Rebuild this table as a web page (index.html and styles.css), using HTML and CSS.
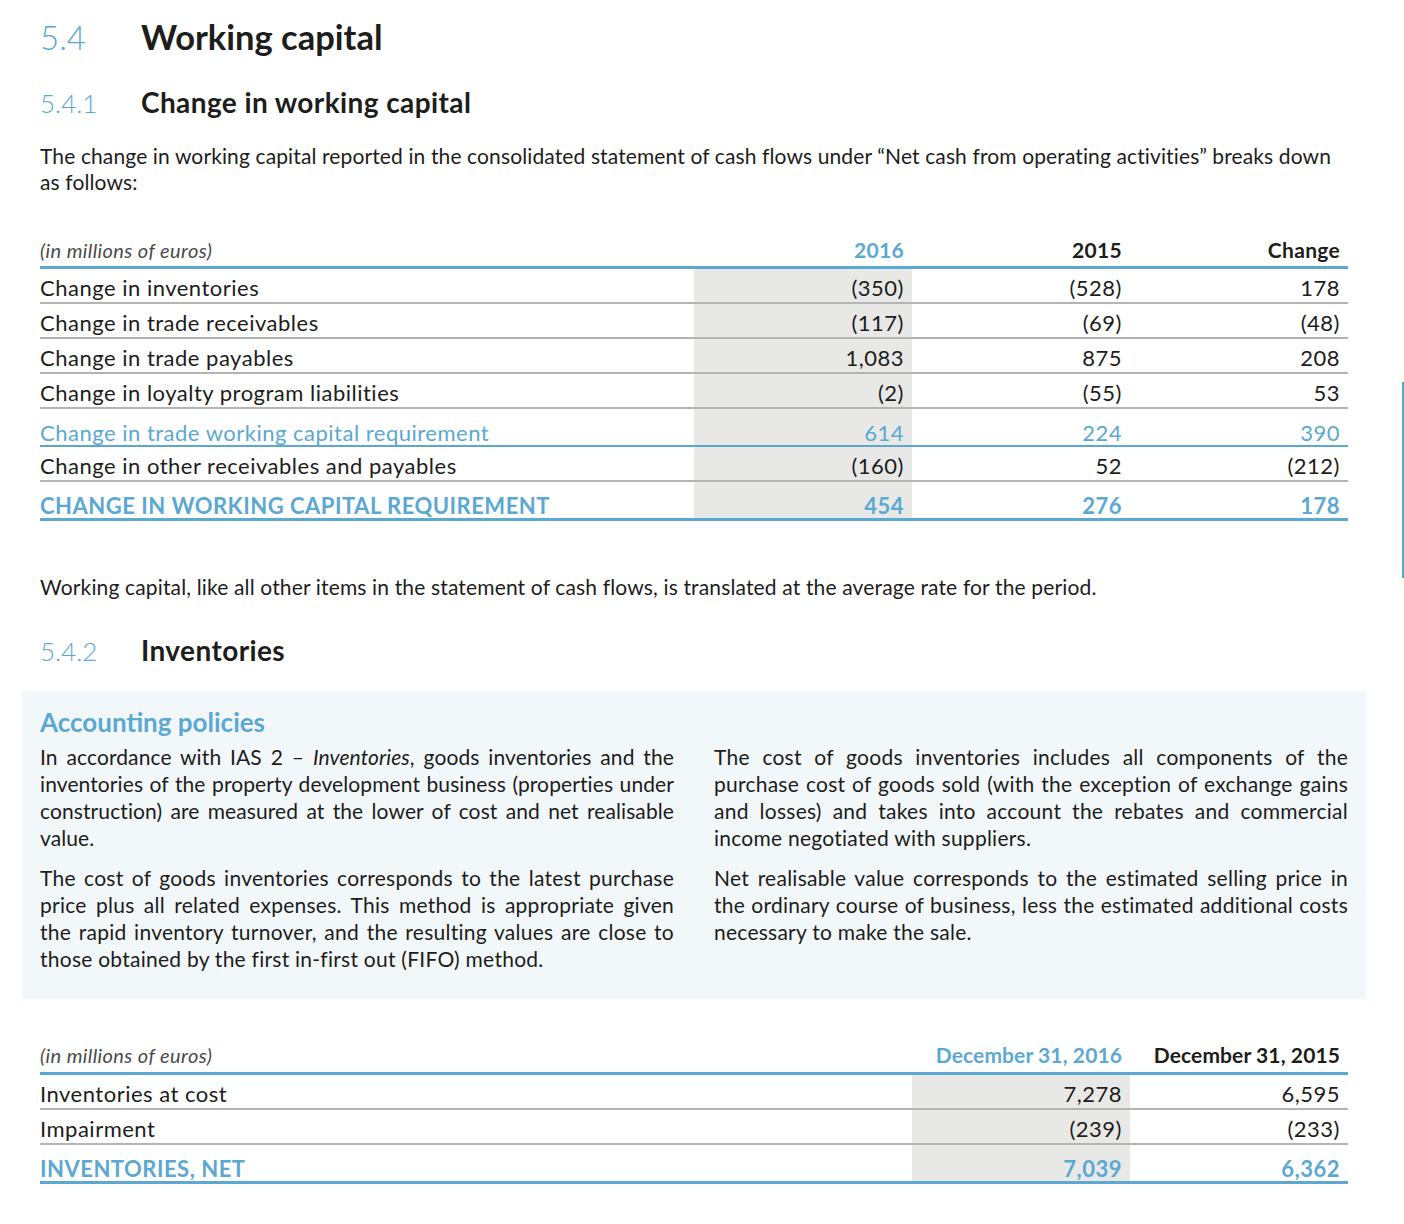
FILE: index.html
```html
<!DOCTYPE html>
<html lang="en">
<head>
<meta charset="utf-8">
<title>Working capital</title>
<link rel="stylesheet" href="styles.css">
</head>
<body>
<div class="page">
  <h1 class="h1"><span class="num">5.4</span><span class="title">Working capital</span></h1>
  <h2 class="h2"><span class="num">5.4.1</span><span class="title">Change in working capital</span></h2>
  <p class="intro">The change in working capital reported in the consolidated statement of cash flows under “Net cash from operating activities” breaks down as follows:</p>

  <table class="fin fin1">
    <colgroup><col class="c-label"><col class="c-val"><col class="c-val"><col class="c-val"></colgroup>
    <thead>
      <tr><th class="unit">(in millions of euros)</th><th class="cur">2016</th><th>2015</th><th>Change</th></tr>
    </thead>
    <tbody>
      <tr><td>Change in inventories</td><td class="sh">(350)</td><td>(528)</td><td>178</td></tr>
      <tr><td>Change in trade receivables</td><td class="sh">(117)</td><td>(69)</td><td>(48)</td></tr>
      <tr><td>Change in trade payables</td><td class="sh">1,083</td><td>875</td><td>208</td></tr>
      <tr><td>Change in loyalty program liabilities</td><td class="sh">(2)</td><td>(55)</td><td>53</td></tr>
      <tr class="sub"><td>Change in trade working capital requirement</td><td class="sh">614</td><td>224</td><td>390</td></tr>
      <tr><td>Change in other receivables and payables</td><td class="sh">(160)</td><td>52</td><td>(212)</td></tr>
      <tr class="tot"><td>CHANGE IN WORKING CAPITAL REQUIREMENT</td><td class="sh">454</td><td>276</td><td>178</td></tr>
    </tbody>
  </table>

  <p class="note">Working capital, like all other items in the statement of cash flows, is translated at the average rate for the period.</p>

  <h2 class="h2 h2b"><span class="num">5.4.2</span><span class="title">Inventories</span></h2>

  <section class="policy">
    <h3 class="policy-title">Accounting policies</h3>
    <div class="policy-cols">
      <div class="col">
        <p class="tight">In accordance with IAS 2 – <em>Inventories</em>, goods inventories and the inventories of the property development business (properties under construction) are measured at the lower of cost and net realisable value.</p>
        <p>The cost of goods inventories corresponds to the latest purchase price plus all related expenses. This method is appropriate given the rapid inventory turnover, and the resulting values are close to those obtained by the first in-first out (FIFO) method.</p>
      </div>
      <div class="col">
        <p>The cost of goods inventories includes all components of the purchase cost of goods sold (with the exception of exchange gains and losses) and takes into account the rebates and commercial income negotiated with suppliers.</p>
        <p>Net realisable value corresponds to the estimated selling price in the ordinary course of business, less the estimated additional costs necessary to make the sale.</p>
      </div>
    </div>
  </section>

  <table class="fin fin2">
    <colgroup><col class="c-label2"><col class="c-val"><col class="c-val"></colgroup>
    <thead>
      <tr><th class="unit">(in millions of euros)</th><th class="cur">December 31, 2016</th><th>December 31, 2015</th></tr>
    </thead>
    <tbody>
      <tr><td>Inventories at cost</td><td class="sh">7,278</td><td>6,595</td></tr>
      <tr><td>Impairment</td><td class="sh">(239)</td><td>(233)</td></tr>
      <tr class="tot"><td>INVENTORIES, NET</td><td class="sh">7,039</td><td>6,362</td></tr>
    </tbody>
  </table>
</div>
<div class="edge-mark"></div>
</body>
</html>
```

FILE: styles.css
```css
html, body {
  margin: 0;
  padding: 0;
  background: #ffffff;
}
body {
  font-family: Lato, "Open Sans", sans-serif;
  color: #1d1d1b;
  width: 1404px;
  min-height: 1224px;
  position: relative;
}
.page {
  padding: 15px 56px 0 40px;
}
.h1, .h2 {
  display: grid;
  grid-template-columns: 101px auto;
  margin: 0;
  align-items: baseline;
}
.num {
  color: #5ba8d3;
  font-weight: 300;
  letter-spacing: 0;
}
.title {
  font-weight: 700;
  color: #1d1d1b;
}
.h1 {
  font-size: 34.5px;
  line-height: 44px;
}
.h1 .num { font-size: 33px; }
.h2 {
  font-size: 28px;
  line-height: 34px;
  margin-top: 26px;
}
.h2 .num { font-size: 26px; }
.h2 .title { letter-spacing: 0.4px; }
.intro {
  font-size: 21px;
  letter-spacing: 0.12px;
  line-height: 26px;
  margin: 23px 0 0;
}
.fin {
  width: 1308px;
  border-collapse: collapse;
  table-layout: fixed;
  font-size: 22px;
  letter-spacing: 0.5px;
}
.fin1 { margin-top: 39px; }
.c-label { width: 654px; }
.c-label2 { width: 872px; }
.c-val { width: 218px; }
.fin th {
  font-size: 21px;
  letter-spacing: 0.3px;
  font-weight: 700;
  text-align: right;
  padding: 0 8px 4px 0;
  height: 28px;
  vertical-align: bottom;
  border-bottom: 3px solid #5ba8d3;
  color: #1d1d1b;
}
.fin th.unit {
  text-align: left;
  font-style: italic;
  font-weight: 400;
  font-size: 20px;
  letter-spacing: 0.4px;
  color: #4a4a4a;
  padding-left: 0;
}
.fin th.cur { color: #5ba8d3; }
.fin2 th { padding-bottom: 5px; letter-spacing: 0.1px; }
.fin2 th.unit { letter-spacing: 0.4px; }
.fin td {
  padding: 7px 8px 2px 0;
  text-align: right;
  border-bottom: 2px solid #b4b4b4;
  vertical-align: middle;
  line-height: 24px;
}
.fin td:first-child {
  text-align: left;
  padding-left: 0;
}
.fin td.sh { background: #e8e8e7; }
.fin tr.sub td {
  color: #5ba8d3;
  border-bottom: 2px solid #5ba8d3;
  padding-top: 12px;
  padding-bottom: 0;
}
.fin tr.tot td {
  color: #5ba8d3;
  font-weight: 700;
  border-bottom: 3px solid #5ba8d3;
  padding-top: 12px;
  padding-bottom: 0;
}
.note {
  font-size: 21px;
  letter-spacing: 0.15px;
  line-height: 26px;
  margin: 53px 0 0;
}
.h2b { margin-top: 33px; }
.policy {
  margin: 23px -18px 0 -18px;
  background: #f2f7fa;
  padding: 14px 18px 27px 18px;
}
.policy-title {
  margin: 0 0 4px;
  color: #5ba8d3;
  font-size: 26px;
  line-height: 34px;
  font-weight: 700;
}
.policy-cols {
  display: grid;
  grid-template-columns: 634px 634px;
  column-gap: 40px;
}
.policy-cols p {
  margin: 0 0 13px;
  font-size: 21px;
  letter-spacing: 0.25px;
  line-height: 27px;
  text-align: justify;
}
.policy-cols p.tight { letter-spacing: 0.1px; }
.policy-cols p:last-child { margin-bottom: 0; }
.fin2 { margin-top: 40px; }
.edge-mark {
  position: absolute;
  left: 1402px;
  top: 382px;
  width: 2px;
  height: 196px;
  background: #5ba8d3;
}
```
